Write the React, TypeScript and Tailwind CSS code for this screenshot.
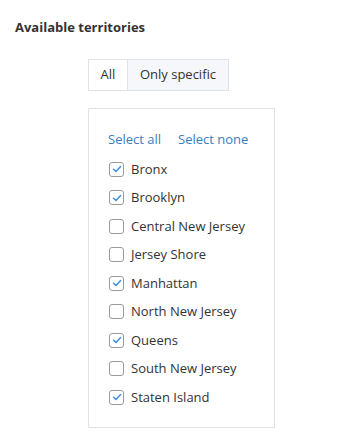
import React, { useState } from "react";

const TERRITORIES = [
  { name: "Bronx", checked: true },
  { name: "Brooklyn", checked: true },
  { name: "Central New Jersey", checked: false },
  { name: "Jersey Shore", checked: false },
  { name: "Manhattan", checked: true },
  { name: "North New Jersey", checked: false },
  { name: "Queens", checked: true },
  { name: "South New Jersey", checked: false },
  { name: "Staten Island", checked: true },
];

function Checkbox({ checked }: { checked: boolean }) {
  return (
    <span className="flex h-[15px] w-[15px] shrink-0 items-center justify-center rounded-[3px] border border-[#9a9a9a] bg-white">
      {checked && (
        <svg width="10" height="10" viewBox="0 0 10 10">
          <path d="M1.5 5.2 L4 7.5 L8.6 2.6" fill="none" stroke="#3d8fe0" strokeWidth="1.5" strokeLinecap="round" strokeLinejoin="round" />
        </svg>
      )}
    </span>
  );
}

export default function App() {
  const [mode, setMode] = useState<"all" | "specific">("specific");
  const [items, setItems] = useState(TERRITORIES);

  return (
    <div className="h-[445px] w-[356px] bg-white pt-[18px] text-[#333] [font-family:'Open_Sans',sans-serif]">
      <h3 className="pl-[15px] text-[13px] font-bold leading-[18px] text-[#333]">Available territories</h3>

      <div className="ml-[88px] mt-[23px] flex h-[32px] w-[141px] border border-[#dfe3e8] text-[13px]">
        <button
          className={`w-[39px] border-r border-[#dfe3e8] ${mode === "all" ? "bg-[#f5f7fa]" : "bg-white"}`}
          onClick={() => setMode("all")}
        >
          All
        </button>
        <button
          className={`flex-1 ${mode === "specific" ? "bg-[#f5f7fa]" : "bg-white"}`}
          onClick={() => setMode("specific")}
        >
          Only specific
        </button>
      </div>

      <div className="ml-[88px] mt-[17px] h-[320px] w-[187px] border border-[#dfe3e8] pl-[20px] pt-[20px]">
        <div className="-ml-[1px] flex gap-[17px] text-[13px] leading-[20px] text-[#3a7dc2]">
          <button onClick={() => setItems(items.map((i) => ({ ...i, checked: true })))}>Select all</button>
          <button onClick={() => setItems(items.map((i) => ({ ...i, checked: false })))}>Select none</button>
        </div>
        <div className="mt-[6px] flex flex-col">
          {items.map((item, idx) => (
            <label
              key={item.name}
              className="flex h-[28.5px] cursor-pointer items-center gap-[7px] text-[13px]"
              onClick={() => setItems(items.map((i, j) => (j === idx ? { ...i, checked: !i.checked } : i)))}
            >
              <Checkbox checked={item.checked} />
              <span>{item.name}</span>
            </label>
          ))}
        </div>
      </div>
    </div>
  );
}
